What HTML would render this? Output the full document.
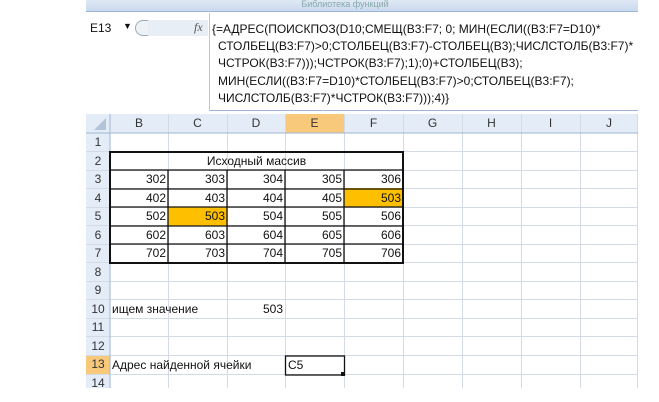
<!DOCTYPE html><html><head><meta charset="utf-8"><style>
body{margin:0;width:659px;height:402px;background:#fff;position:relative;overflow:hidden;font-family:"Liberation Sans","DejaVu Sans",sans-serif;font-size:12px;color:#111}
.a{position:absolute;box-sizing:border-box}
.fl{line-height:16.5px;white-space:nowrap;font-size:12px}
.c{position:absolute;box-sizing:border-box;line-height:18px;white-space:nowrap}
</style></head><body>
<div class="a" style="left:86px;top:0;width:552px;height:12px;background:linear-gradient(#dfe9f5,#c9d9ee);border-bottom:1px solid #9eb6d4"></div>
<div class="a" style="left:205px;top:0;width:280px;height:9px;color:#8aa;font-size:9px;text-align:center;line-height:8px">Библиотека функций</div>
<div class="a" style="left:86px;top:13px;width:552px;height:98px;background:#fff;border-bottom:1px solid #9eb6d4"></div>
<div class="a" style="left:86px;top:13px;width:124px;height:98px;background:#fff;border-right:1px solid #b8c8dc"></div>
<div class="a" style="left:90px;top:21px;font-size:12px">E13</div>
<div class="a" style="left:123px;top:21px;font-size:9px">▼</div>
<div class="a" style="left:135px;top:20px;width:14px;height:16px;border:1px solid #9ab;border-radius:8px 0 0 8px;border-right:none;background:#eef2f7"></div>
<div class="a" style="left:148px;top:20px;width:60px;height:16px;background:#e8eef5"></div>
<div class="a" style="left:194px;top:20px;font-style:italic;font-family:'Liberation Serif',serif;font-size:12px;color:#555">fx</div>
<div class="a fl" style="left:212px;top:21px">{=АДРЕС(ПОИСКПОЗ(D10;СМЕЩ(B3:F7; 0; МИН(ЕСЛИ((B3:F7=D10)*</div>
<div class="a fl" style="left:218px;top:38px">СТОЛБЕЦ(B3:F7)&gt;0;СТОЛБЕЦ(B3:F7)-СТОЛБЕЦ(B3);ЧИСЛСТОЛБ(B3:F7)*</div>
<div class="a fl" style="left:218px;top:55px">ЧСТРОК(B3:F7)));ЧСТРОК(B3:F7);1);0)+СТОЛБЕЦ(B3);</div>
<div class="a fl" style="left:218px;top:73px">МИН(ЕСЛИ((B3:F7=D10)*СТОЛБЕЦ(B3:F7)&gt;0;СТОЛБЕЦ(B3:F7);</div>
<div class="a fl" style="left:218px;top:90px">ЧИСЛСТОЛБ(B3:F7)*ЧСТРОК(B3:F7)));4)}</div>
<svg class="a" style="left:86px;top:114px" width="552" height="274">
<rect x="0" y="0" width="552" height="19" fill="#e4ecf7"/>
<rect x="199" y="0" width="59" height="19" fill="#f8c97a"/>
<rect x="0" y="19" width="24" height="255" fill="#e4ecf7"/>
<rect x="0" y="241" width="24" height="19" fill="#f8c97a"/>
<polygon points="20,4 20,16 8,16" fill="#b4c4d8"/>
<g stroke="#d4dbe4" stroke-width="1">
<line x1="82.5" y1="0" x2="82.5" y2="274"/><line x1="141.5" y1="0" x2="141.5" y2="274"/><line x1="199.5" y1="0" x2="199.5" y2="274"/><line x1="258.5" y1="0" x2="258.5" y2="274"/><line x1="317.5" y1="0" x2="317.5" y2="274"/><line x1="376.5" y1="0" x2="376.5" y2="274"/><line x1="435.5" y1="0" x2="435.5" y2="274"/><line x1="494.5" y1="0" x2="494.5" y2="274"/><line x1="551.5" y1="0" x2="551.5" y2="274"/>
<line x1="0" y1="37.5" x2="552" y2="37.5"/><line x1="0" y1="56.5" x2="552" y2="56.5"/><line x1="0" y1="74.5" x2="552" y2="74.5"/><line x1="0" y1="93.5" x2="552" y2="93.5"/><line x1="0" y1="111.5" x2="552" y2="111.5"/><line x1="0" y1="130.5" x2="552" y2="130.5"/><line x1="0" y1="148.5" x2="552" y2="148.5"/><line x1="0" y1="167.5" x2="552" y2="167.5"/><line x1="0" y1="185.5" x2="552" y2="185.5"/><line x1="0" y1="204.5" x2="552" y2="204.5"/><line x1="0" y1="222.5" x2="552" y2="222.5"/><line x1="0" y1="241.5" x2="552" y2="241.5"/><line x1="0" y1="260.5" x2="552" y2="260.5"/>
</g>
<line x1="0" y1="19" x2="552" y2="19" stroke="#9eb6d4"/>
<line x1="24" y1="0" x2="24" y2="274" stroke="#9eb6d4"/>
<rect x="82" y="93" width="59" height="19" fill="#fdbf00"/>
<rect x="258" y="74" width="59" height="19" fill="#fdbf00"/>
<g stroke="#111" stroke-width="1.3" fill="none">
<rect x="24" y="38" width="293" height="111" stroke-width="2"/>
<line x1="24" y1="56" x2="317" y2="56"/><line x1="24" y1="75" x2="317" y2="75"/><line x1="24" y1="93" x2="317" y2="93"/><line x1="24" y1="112" x2="317" y2="112"/><line x1="24" y1="130" x2="317" y2="130"/>
<line x1="82" y1="56" x2="82" y2="149"/><line x1="141" y1="56" x2="141" y2="149"/><line x1="199" y1="56" x2="199" y2="149"/><line x1="258" y1="56" x2="258" y2="149"/>
<rect x="199.5" y="242" width="59" height="19"/>
</g>
<rect x="255" y="258" width="4" height="4" fill="#111"/>
</svg>
<div class="a" style="left:86px;top:114px;width:552px;height:19px;color:#333">
<span class="c" style="left:24px;width:58px;text-align:center">B</span><span class="c" style="left:82px;width:59px;text-align:center">C</span><span class="c" style="left:141px;width:58px;text-align:center">D</span><span class="c" style="left:199px;width:59px;text-align:center">E</span><span class="c" style="left:258px;width:59px;text-align:center">F</span><span class="c" style="left:317px;width:59px;text-align:center">G</span><span class="c" style="left:376px;width:59px;text-align:center">H</span><span class="c" style="left:435px;width:59px;text-align:center">I</span><span class="c" style="left:494px;width:58px;text-align:center">J</span>
</div>
<div class="a" style="left:86px;top:133px;width:24px;color:#333;text-align:center;line-height:18.5px">1<br>2<br>3<br>4<br>5<br>6<br>7<br>8<br>9<br>10<br>11<br>12<br>13<br>14</div>
<div class="a" style="left:110px;top:152px;width:293px;text-align:center;line-height:18px">Исходный массив</div>
<div class="a" style="left:110px;top:170px;width:293px;line-height:18.6px">
<div style="display:flex"><span style="width:56px;text-align:right">302</span><span style="width:59px;text-align:right">303</span><span style="width:58px;text-align:right">304</span><span style="width:59px;text-align:right">305</span><span style="width:59px;text-align:right">306</span></div>
<div style="display:flex"><span style="width:56px;text-align:right">402</span><span style="width:59px;text-align:right">403</span><span style="width:58px;text-align:right">404</span><span style="width:59px;text-align:right">405</span><span style="width:59px;text-align:right">503</span></div>
<div style="display:flex"><span style="width:56px;text-align:right">502</span><span style="width:59px;text-align:right">503</span><span style="width:58px;text-align:right">504</span><span style="width:59px;text-align:right">505</span><span style="width:59px;text-align:right">506</span></div>
<div style="display:flex"><span style="width:56px;text-align:right">602</span><span style="width:59px;text-align:right">603</span><span style="width:58px;text-align:right">604</span><span style="width:59px;text-align:right">605</span><span style="width:59px;text-align:right">606</span></div>
<div style="display:flex"><span style="width:56px;text-align:right">702</span><span style="width:59px;text-align:right">703</span><span style="width:58px;text-align:right">704</span><span style="width:59px;text-align:right">705</span><span style="width:59px;text-align:right">706</span></div>
</div>
<div class="c" style="left:112px;top:300px">ищем значение</div>
<div class="c" style="left:227px;top:300px;width:56px;text-align:right">503</div>
<div class="c" style="left:112px;top:356px">Адрес найденной ячейки</div>
<div class="c" style="left:288px;top:356px">C5</div>
</body></html>
